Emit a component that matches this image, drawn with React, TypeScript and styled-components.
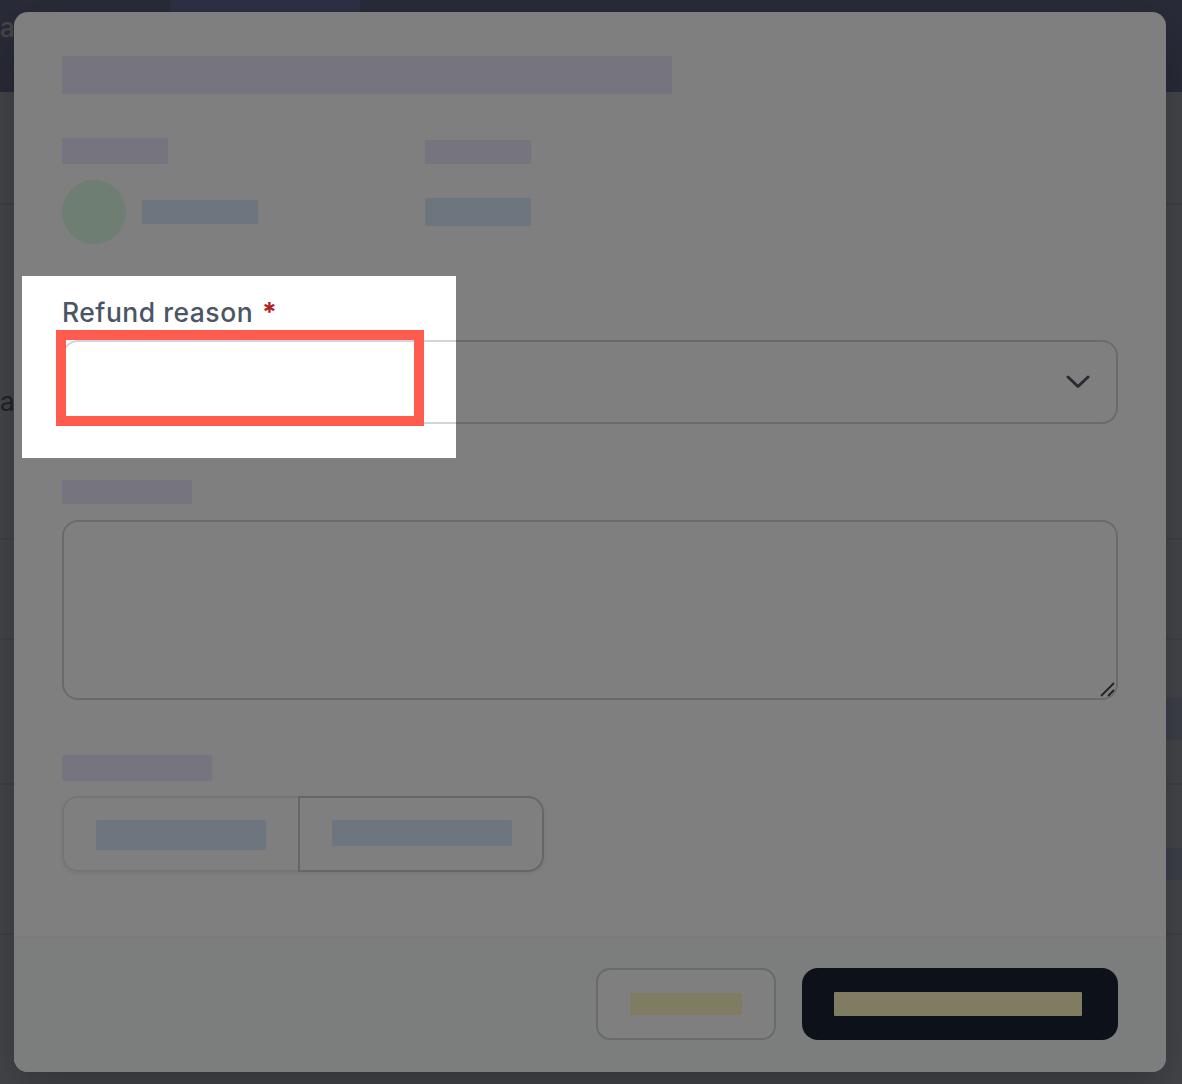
import React from "react";
import styled, { createGlobalStyle } from "styled-components";

const GlobalStyle = createGlobalStyle`
  html, body { margin: 0; padding: 0; }
  body {
    font-family: Inter, "Noto Sans", "Liberation Sans", sans-serif;
    background: #ffffff;
  }
  * { box-sizing: border-box; }
`;

/* ---------- page behind the dialog ---------- */

const Page = styled.div`
  position: relative;
  width: 1182px;
  height: 1084px;
  overflow: hidden;
  background: #ffffff;
`;

const TopBar = styled.header`
  height: 92px;
  display: flex;
  background: #9394b9;
`;

const Brand = styled.div`
  width: 170px;
  padding-top: 8px;
  font-size: 26px;
  line-height: 40px;
  font-weight: 500;
  color: #ffffff;
`;

const NavTab = styled.div`
  width: 190px;
  height: 100%;
  background: #a7a8ed;
`;

const ListArea = styled.main`
  display: flex;
  flex-direction: column;
`;

const ListRow = styled.div<{ $h: number; $pt?: number }>`
  height: ${(p) => p.$h}px;
  padding-top: ${(p) => p.$pt ?? 0}px;
  border-bottom: 2px solid #e5e7eb;
  display: flex;
  justify-content: space-between;
  align-items: flex-start;
`;

const RowText = styled.span`
  font-size: 26px;
  line-height: 40px;
  color: #6b7280;
`;

const RowPill = styled.span<{ $h: number }>`
  width: 60px;
  height: ${(p) => p.$h}px;
  margin-right: -30px;
  border-radius: 10px;
  background: #e0e7ff;
`;

const Backdrop = styled.div`
  position: absolute;
  inset: 0;
  background: rgba(17, 24, 39, 0.5);
`;

/* ---------- dialog ---------- */

const Dialog = styled.section`
  position: absolute;
  left: 14px;
  top: 12px;
  width: 1152px;
  height: 1060px;
  background: #ffffff;
  border-radius: 14px;
  overflow: hidden;
  display: flex;
  flex-direction: column;
  box-shadow: 0 20px 50px rgba(0, 0, 0, 0.25);
`;

const DialogBody = styled.div`
  padding: 44px 48px 0;
  display: flex;
  flex-direction: column;
`;

type Tone = "violet" | "blue" | "yellow";
const toneColor: Record<Tone, string> = {
  violet: "#ede9fe",
  blue: "#dbeafe",
  yellow: "#fef9c3",
};

const Skeleton = styled.span<{ $w: number; $h: number; $tone: Tone; $mt?: number }>`
  display: block;
  flex: none;
  width: ${(p) => p.$w}px;
  height: ${(p) => p.$h}px;
  margin-top: ${(p) => p.$mt ?? 0}px;
  background: ${(p) => toneColor[p.$tone]};
  border-radius: 1px;
`;

const PartyGrid = styled.div`
  margin-top: 44px;
  display: grid;
  grid-template-columns: repeat(3, 1fr);
  column-gap: 32px;
`;

const PartyColumn = styled.div`
  display: flex;
  flex-direction: column;
`;

const PartyRow = styled.div`
  margin-top: 16px;
  height: 64px;
  display: flex;
  align-items: center;
  gap: 16px;
`;

const Avatar = styled.span`
  width: 64px;
  height: 64px;
  border-radius: 50%;
  background: #dcfce7;
  flex: none;
`;

const Field = styled.div`
  margin-top: 48px;
  display: flex;
  flex-direction: column;
`;

const FieldLabel = styled.label`
  height: 40px;
  margin-bottom: 8px;
  display: flex;
  align-items: center;
  font-size: 26.5px;
  letter-spacing: 0.5px;
  line-height: 40px;
  font-weight: 500;
  color: #4b5563;
`;

const Required = styled.span`
  margin-left: 9px;
  color: #b91c1c;
  font-weight: 700;
`;

const SelectBox = styled.button`
  height: 84px;
  width: 100%;
  border: 2px solid #d1d5db;
  border-radius: 16px;
  background: #ffffff;
  display: flex;
  align-items: center;
  justify-content: flex-end;
  padding: 0 26px 0 0;
  font: inherit;
  cursor: pointer;
`;

const NotesWrap = styled.div`
  position: relative;
  height: 180px;
`;

const NotesArea = styled.textarea`
  display: block;
  height: 100%;
  width: 100%;
  border: 2px solid #d1d5db;
  border-radius: 16px;
  background: #ffffff;
  resize: none;
  font: inherit;
  outline: none;
`;

const ResizeGrip = styled.svg`
  position: absolute;
  right: 3px;
  bottom: 3px;
  pointer-events: none;
`;

const Segmented = styled.div`
  display: flex;
  align-self: flex-start;
  border-radius: 16px;
  box-shadow: 0 2px 4px rgba(0, 0, 0, 0.07);
`;

const SegmentOption = styled.button<{ $side: "left" | "right"; $w: number }>`
  width: ${(p) => p.$w}px;
  height: 76px;
  padding: 22px 32px 0;
  display: flex;
  align-items: flex-start;
  background: #ffffff;
  font: inherit;
  border: 2px solid ${(p) => (p.$side === "left" ? "#e8eaee" : "#c9ccd4")};
  border-right-width: ${(p) => (p.$side === "left" ? 0 : 2)}px;
  border-radius: ${(p) => (p.$side === "left" ? "16px 0 0 16px" : "0 16px 16px 0")};
`;

const Footer = styled.footer`
  margin-top: auto;
  height: 136px;
  padding: 30px 48px 32px;
  display: flex;
  justify-content: flex-end;
  gap: 26px;
  background: #f9fafb;
  border-top: 2px solid #f6f7f8;
`;

const FooterButton = styled.button<{ $primary?: boolean; $w: number }>`
  width: ${(p) => p.$w}px;
  height: 72px;
  display: flex;
  align-items: center;
  justify-content: ${(p) => (p.$primary ? "flex-start" : "center")};
  padding: 0 0 0 ${(p) => (p.$primary ? 32 : 0)}px;
  border-radius: ${(p) => (p.$primary ? 16 : 14)}px;
  border: ${(p) => (p.$primary ? "none" : "2px solid #d1d5db")};
  background: ${(p) => (p.$primary ? "#1a2234" : "#ffffff")};
  font: inherit;
`;

/* ---------- product tour ---------- */

const TourSpotlight = styled.div`
  position: absolute;
  left: 22px;
  top: 276px;
  width: 434px;
  height: 182px;
  box-shadow: 0 0 0 3000px rgba(0, 0, 0, 0.5);
  pointer-events: none;
`;

const TourTarget = styled.div`
  position: absolute;
  left: 56px;
  top: 330px;
  width: 368px;
  height: 96px;
  border: 10px solid #ff5b4e;
  pointer-events: none;
`;

const Chevron = () => (
  <svg width="24" height="14" viewBox="0 0 24 14" fill="none" aria-hidden="true">
    <polyline
      points="2,2 12,11.5 22,2"
      stroke="#4f5664"
      strokeWidth="3"
      strokeLinecap="round"
      strokeLinejoin="round"
    />
  </svg>
);

export default function App() {
  return (
    <>
      <GlobalStyle />
      <Page>
        <TopBar>
          <Brand>a</Brand>
          <NavTab />
        </TopBar>
        <ListArea>
          <ListRow $h={113} />
          <ListRow $h={335} $pt={177}>
            <RowText>a</RowText>
          </ListRow>
          <ListRow $h={100} />
          <ListRow $h={145} $pt={58}>
            <span />
            <RowPill $h={42} />
          </ListRow>
          <ListRow $h={150} $pt={63}>
            <span />
            <RowPill $h={32} />
          </ListRow>
        </ListArea>

        <Backdrop />

        <Dialog role="dialog" aria-modal="true">
          <DialogBody>
            <Skeleton $w={610} $h={38} $tone="violet" />

            <PartyGrid>
              <PartyColumn>
                <Skeleton $w={106} $h={26} $tone="violet" />
                <PartyRow>
                  <Avatar />
                  <Skeleton $w={116} $h={24} $tone="blue" />
                </PartyRow>
              </PartyColumn>
              <PartyColumn>
                <Skeleton $w={106} $h={24} $tone="violet" $mt={2} />
                <PartyRow>
                  <Skeleton $w={106} $h={28} $tone="blue" />
                </PartyRow>
              </PartyColumn>
            </PartyGrid>

            <Field>
              <FieldLabel>
                Refund reason<Required>*</Required>
              </FieldLabel>
              <SelectBox type="button" aria-label="Refund reason">
                <Chevron />
              </SelectBox>
            </Field>

            <Field>
              <FieldLabel>
                <Skeleton $w={130} $h={24} $tone="violet" />
              </FieldLabel>
              <NotesWrap>
                <NotesArea />
                <ResizeGrip width="16" height="16" viewBox="0 0 16 16" aria-hidden="true">
                  <line x1="15" y1="2" x2="2" y2="15" stroke="#444" strokeWidth="1.8" />
                  <line x1="15" y1="9" x2="9" y2="15" stroke="#444" strokeWidth="1.8" />
                </ResizeGrip>
              </NotesWrap>
            </Field>

            <Field>
              <FieldLabel>
                <Skeleton $w={150} $h={26} $tone="violet" />
              </FieldLabel>
              <Segmented>
                <SegmentOption type="button" $side="left" $w={236}>
                  <Skeleton $w={170} $h={30} $tone="blue" />
                </SegmentOption>
                <SegmentOption type="button" $side="right" $w={246}>
                  <Skeleton $w={180} $h={26} $tone="blue" />
                </SegmentOption>
              </Segmented>
            </Field>
          </DialogBody>

          <Footer>
            <FooterButton type="button" $w={180}>
              <Skeleton $w={112} $h={22} $tone="yellow" />
            </FooterButton>
            <FooterButton type="button" $primary $w={316}>
              <Skeleton $w={248} $h={24} $tone="yellow" />
            </FooterButton>
          </Footer>
        </Dialog>

        <TourSpotlight />
        <TourTarget />
      </Page>
    </>
  );
}
